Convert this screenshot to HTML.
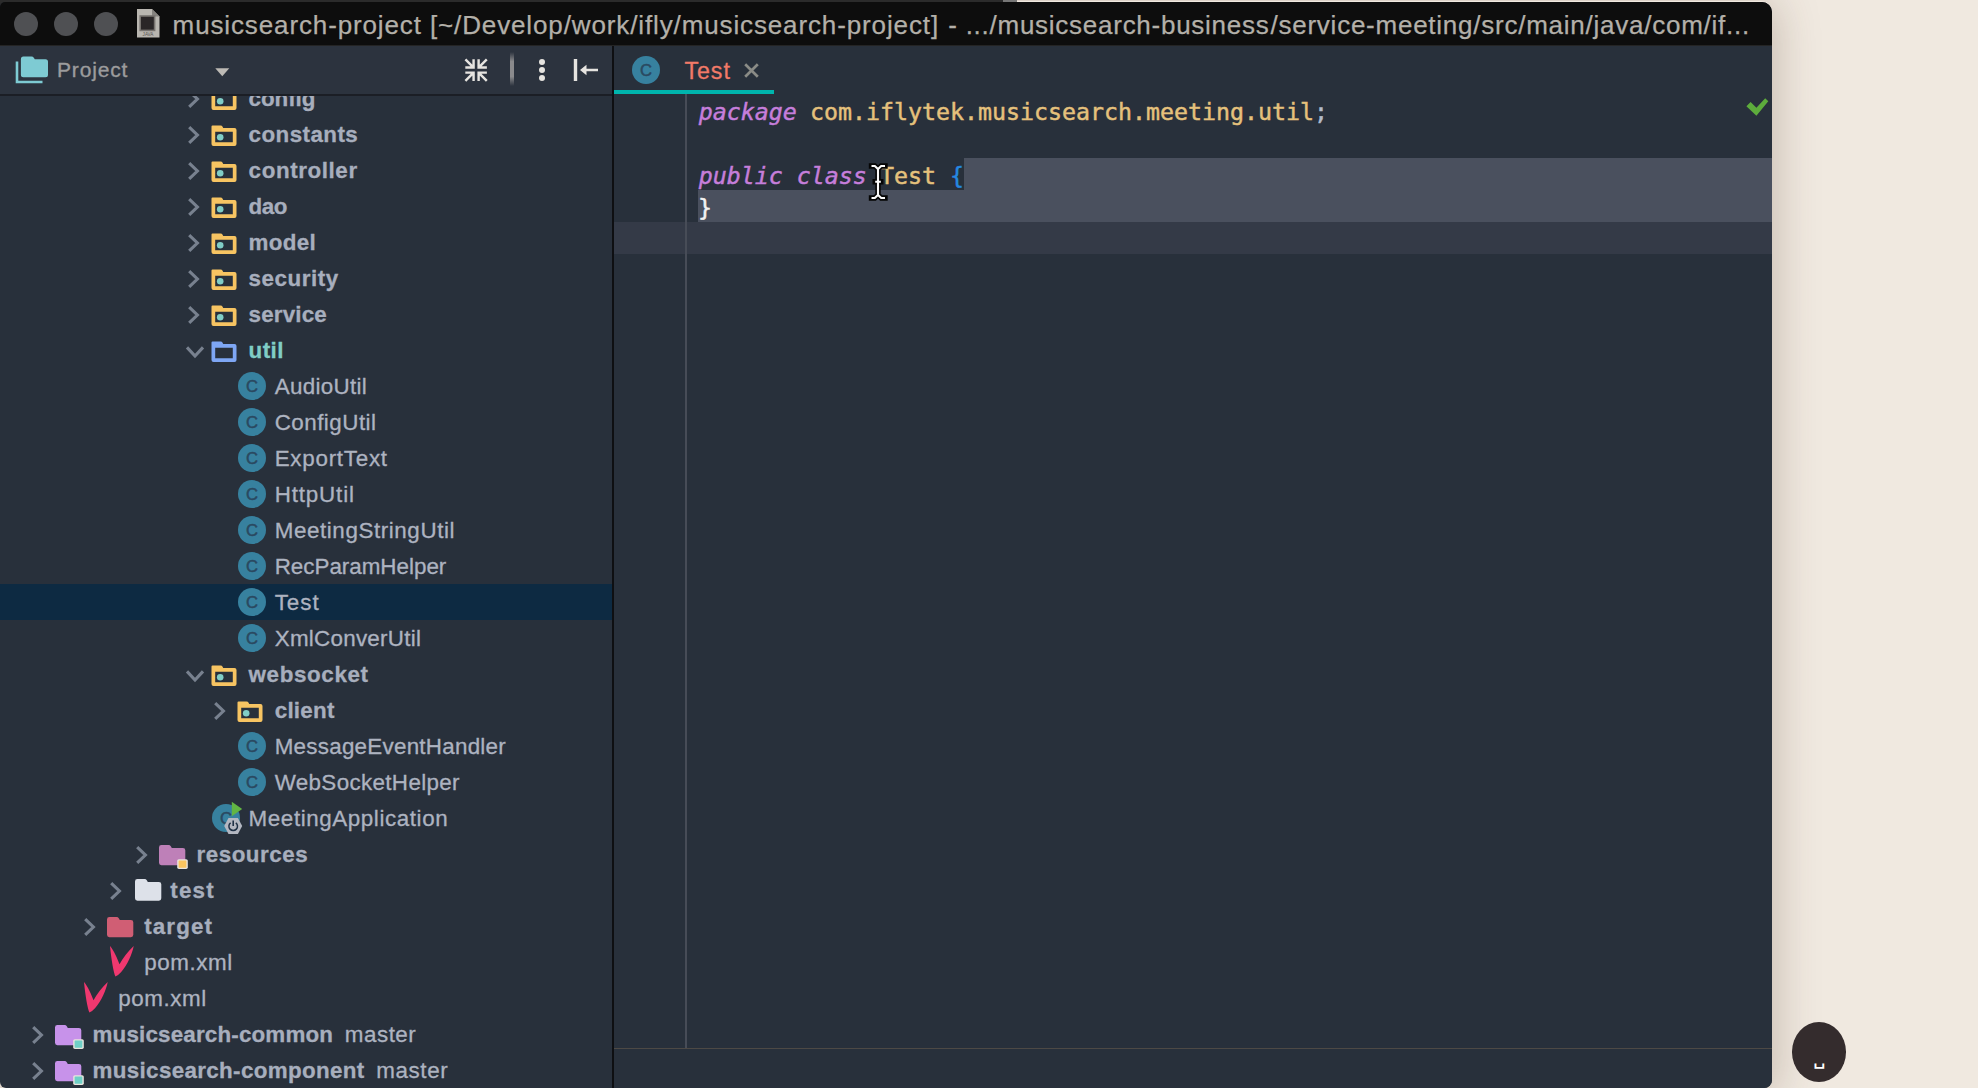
<!DOCTYPE html>
<html><head><meta charset="utf-8"><title>Test</title>
<style>
html,body{margin:0;padding:0}
body{width:1978px;height:1088px;overflow:hidden;position:relative;background:#f0e9e0;font-family:"Liberation Sans",sans-serif}
.topstrip{position:absolute;left:0;top:0;width:1003px;height:20px;background:#2b2b2b}
.topstrip2{position:absolute;left:1003px;top:0;width:14px;height:3px;background:#777}
.shadow{position:absolute;left:0;top:1px;width:1772px;height:1087px;border-radius:0 11px 8px 6px;box-shadow:0 4px 44px 4px rgba(80,55,35,.26)}
.win{position:absolute;left:0;top:2px;width:1772px;height:1086px;background:#28303b;border-radius:5px 10px 8px 6px;overflow:hidden}
.title{position:absolute;left:0;top:0;width:1772px;height:42.6px;background:#0d0d0d;border-bottom:2px solid #242424}
.tl{position:absolute;top:10px;width:24px;height:24px;border-radius:50%;background:#4f5053}
.tool{position:absolute;left:0;top:44px;width:612px;height:48px;background:#2c333e;border-bottom:2px solid #1b1e25}
.vsep{position:absolute;left:611.6px;top:44px;width:2.2px;height:1060px;background:#0e0f12}
.tabs{position:absolute;left:614px;top:44px;width:1158px;height:48px;background:#28303b}
.tabline{position:absolute;left:614px;top:87.6px;width:160px;height:4.7px;background:#00b5ad}
.treeclip{position:absolute;left:0;top:94px;width:612px;height:992px;overflow:hidden}
.tree{position:absolute;left:0;top:-96px;width:611px;height:1090px}
.t{position:absolute;white-space:pre;line-height:0;color:#a9b0bf;font-size:22.4px}
.t::before{content:"";display:inline-block;height:0;width:0}
.b{font-weight:bold;color:#a7aebd;-webkit-text-stroke:0.3px #a7aebd}
.n{font-weight:normal;color:#adb3c0;-webkit-text-stroke:0.3px #adb3c0}
.i{position:absolute;overflow:visible}
.ci{position:absolute;border-radius:50%;background:#37819f;color:#2a4961;font-size:16.6px;font-weight:normal;-webkit-text-stroke:0.5px #2a4961;text-align:center;font-family:"Liberation Sans",sans-serif}
.sel{position:absolute;left:0;width:612px;height:36px;background:#0d2a42}
.code{position:absolute;white-space:pre;font-family:"DejaVu Sans Mono","Liberation Mono",monospace;font-size:23.25px;line-height:0;color:#e5c17c;-webkit-text-stroke:0.45px #e5c17c}
.kw{position:relative;left:0.8px;color:#c67edb;font-style:italic;-webkit-text-stroke-color:#c67edb}
</style></head><body>
<div class="shadow"></div>
<div class="topstrip"></div><div class="topstrip2"></div>
<div class="win">
<div class="title">
<div class="tl" style="left:14px"></div><div class="tl" style="left:54px"></div><div class="tl" style="left:94px"></div>
<svg class="i" style="left:137px;top:7px" width="23" height="30" viewBox="0 0 23 30"><path d="M0 0 H15 L22.5 7.5 V28.6 H0 Z" fill="#b9b6b0"/><path d="M15 0 L22.5 7.5 H15 Z" fill="#85827e"/><rect x="3.2" y="7" width="14.4" height="14.4" fill="#2a2627" stroke="#77736f" stroke-width="1.6"/><text x="11" y="26.8" font-size="4.6" text-anchor="middle" fill="#55524f" font-family="Liberation Sans, sans-serif">JAVA</text></svg>
<span id="title1" class="t " style="left:172.6px;top:22.9px;font-size:26px;letter-spacing:0.874px;color:#b3b0a9;-webkit-text-stroke:0.25px #b3b0a9;">musicsearch-project [~/Develop/work/ifly/musicsearch-project]</span>
<span id="title2" class="t " style="left:948.3px;top:22.9px;font-size:26px;letter-spacing:0.739px;color:#b3b0a9;-webkit-text-stroke:0.25px #b3b0a9;">- .../musicsearch-business</span>
<span id="title3" class="t " style="left:1270.5px;top:22.9px;font-size:26px;letter-spacing:0.754px;color:#b3b0a9;-webkit-text-stroke:0.25px #b3b0a9;">/service-meeting/src/main/java/com/if...</span>
</div>
<div class="tool">
<svg class="i" style="left:15px;top:10px" width="36" height="30" viewBox="0 0 36 30"><path d="M2 5.5 V26 H27.5" fill="none" stroke="#7ecbd3" stroke-width="2.6"/><path d="M8.4 0.5 H16.5 Q18 0.5 18.8 1.8 L19.8 3.3 H30.5 Q33 3.3 33 5.8 V18.8 Q33 21.3 30.5 21.3 H8.4 Q5.9 21.3 5.9 18.8 V3 Q5.9 0.5 8.4 0.5 Z" fill="#7ecbd3"/></svg>
<span id="proj" class="t " style="left:57.0px;top:24.0px;font-size:21px;letter-spacing:0.834px;color:#9c9c9d;-webkit-text-stroke:0.35px #9c9c9d;">Project</span>
<svg class="i" style="left:215px;top:22px" width="15" height="9" viewBox="0 0 15 9"><path d="M0.3 0.2 H14.3 L7.3 8.2 Z" fill="#bdbab5"/></svg>
<svg class="i" style="left:464px;top:12px" width="24.2" height="24.2" viewBox="0 0 26 26"><g fill="none" stroke="#e6e4e0" stroke-width="2.6"><path d="M1.5 1.5 L9.8 9.8 M1.4 10.3 H10.3 V1.4"/><path d="M24.5 1.5 L16.2 9.8 M24.6 10.3 H15.7 V1.4"/><path d="M1.5 24.5 L9.8 16.2 M1.4 15.7 H10.3 V24.6"/><path d="M24.5 24.5 L16.2 16.2 M24.6 15.7 H15.7 V24.6"/></g></svg>
<div style="position:absolute;left:510.2px;top:6px;width:3.6px;height:34px;background:linear-gradient(to bottom,rgba(130,130,132,0),#8a8a8c 28%,#8a8a8c 72%,rgba(130,130,132,0))"></div>
<svg class="i" style="left:538px;top:13px" width="8" height="24" viewBox="0 0 8 24"><circle cx="4" cy="3" r="3" fill="#e6e4e0"/><circle cx="4" cy="11" r="3" fill="#e6e4e0"/><circle cx="4" cy="19.1" r="3" fill="#e6e4e0"/></svg>
<svg class="i" style="left:572px;top:13px" width="28" height="22" viewBox="0 0 28 22"><path d="M3.5 0 V22" stroke="#e6e4e0" stroke-width="3.4"/><path d="M26 11 H10" stroke="#e6e4e0" stroke-width="2.6"/><path d="M8 11 L14.5 5.8 V16.2 Z" fill="#e6e4e0"/></svg>
</div>
<div class="tabs">
<span class="ci" style="left:18.0px;top:10.3px;width:28px;height:28px;line-height:30.2px">C</span>
<span id="tab" class="t " style="left:70.5px;top:24.7px;font-size:23.2px;letter-spacing:0.942px;color:#f27a68;-webkit-text-stroke:0.3px #f27a68;">Test</span>
<svg class="i" style="left:130px;top:17px" width="15" height="15" viewBox="0 0 15 15"><path d="M1.2 1.2 L13.8 13.8 M13.8 1.2 L1.2 13.8" stroke="#8a8b86" stroke-width="2.7"/></svg>
</div>
<div class="tabline"></div>
<div class="treeclip"><div class="tree">
<svg class="i" style="left:186.0px;top:88.0px" width="16" height="22" viewBox="0 0 16 22"><path d="M3.2 3.2 L11.4 11 L3.2 18.8" fill="none" stroke="#78818f" stroke-width="3.1" stroke-linejoin="miter"/></svg>
<svg class="i" style="left:211.0px;top:88.7px" width="27" height="22" viewBox="0 0 27 22"><path d="M1.5 0.5 H9.5 Q11 0.5 11.6 1.8 L12.2 3 H23.5 Q25.5 3 25.5 5 V19 Q25.5 21 23.5 21 H2.5 Q0.5 21 0.5 19 V1.5 Q0.5 0.5 1.5 0.5 Z M4.2 6.8 V17.2 H21.8 V6.8 Z" fill="#f7c462" fill-rule="evenodd"/><circle cx="9.2" cy="12.2" r="3.3" fill="#80cdc6"/></svg>
<span id="r0" class="t b" style="left:248.6px;top:98.6px;font-size:22.4px;letter-spacing:-0.079px;">config</span>
<svg class="i" style="left:186.0px;top:124.0px" width="16" height="22" viewBox="0 0 16 22"><path d="M3.2 3.2 L11.4 11 L3.2 18.8" fill="none" stroke="#78818f" stroke-width="3.1" stroke-linejoin="miter"/></svg>
<svg class="i" style="left:211.0px;top:124.7px" width="27" height="22" viewBox="0 0 27 22"><path d="M1.5 0.5 H9.5 Q11 0.5 11.6 1.8 L12.2 3 H23.5 Q25.5 3 25.5 5 V19 Q25.5 21 23.5 21 H2.5 Q0.5 21 0.5 19 V1.5 Q0.5 0.5 1.5 0.5 Z M4.2 6.8 V17.2 H21.8 V6.8 Z" fill="#f7c462" fill-rule="evenodd"/><circle cx="9.2" cy="12.2" r="3.3" fill="#80cdc6"/></svg>
<span id="r1" class="t b" style="left:248.6px;top:134.6px;font-size:22.4px;letter-spacing:0.426px;">constants</span>
<svg class="i" style="left:186.0px;top:160.0px" width="16" height="22" viewBox="0 0 16 22"><path d="M3.2 3.2 L11.4 11 L3.2 18.8" fill="none" stroke="#78818f" stroke-width="3.1" stroke-linejoin="miter"/></svg>
<svg class="i" style="left:211.0px;top:160.7px" width="27" height="22" viewBox="0 0 27 22"><path d="M1.5 0.5 H9.5 Q11 0.5 11.6 1.8 L12.2 3 H23.5 Q25.5 3 25.5 5 V19 Q25.5 21 23.5 21 H2.5 Q0.5 21 0.5 19 V1.5 Q0.5 0.5 1.5 0.5 Z M4.2 6.8 V17.2 H21.8 V6.8 Z" fill="#f7c462" fill-rule="evenodd"/><circle cx="9.2" cy="12.2" r="3.3" fill="#80cdc6"/></svg>
<span id="r2" class="t b" style="left:248.6px;top:170.6px;font-size:22.4px;letter-spacing:0.583px;">controller</span>
<svg class="i" style="left:186.0px;top:196.0px" width="16" height="22" viewBox="0 0 16 22"><path d="M3.2 3.2 L11.4 11 L3.2 18.8" fill="none" stroke="#78818f" stroke-width="3.1" stroke-linejoin="miter"/></svg>
<svg class="i" style="left:211.0px;top:196.7px" width="27" height="22" viewBox="0 0 27 22"><path d="M1.5 0.5 H9.5 Q11 0.5 11.6 1.8 L12.2 3 H23.5 Q25.5 3 25.5 5 V19 Q25.5 21 23.5 21 H2.5 Q0.5 21 0.5 19 V1.5 Q0.5 0.5 1.5 0.5 Z M4.2 6.8 V17.2 H21.8 V6.8 Z" fill="#f7c462" fill-rule="evenodd"/><circle cx="9.2" cy="12.2" r="3.3" fill="#80cdc6"/></svg>
<span id="r3" class="t b" style="left:248.6px;top:206.6px;font-size:22.4px;letter-spacing:-0.471px;">dao</span>
<svg class="i" style="left:186.0px;top:232.0px" width="16" height="22" viewBox="0 0 16 22"><path d="M3.2 3.2 L11.4 11 L3.2 18.8" fill="none" stroke="#78818f" stroke-width="3.1" stroke-linejoin="miter"/></svg>
<svg class="i" style="left:211.0px;top:232.7px" width="27" height="22" viewBox="0 0 27 22"><path d="M1.5 0.5 H9.5 Q11 0.5 11.6 1.8 L12.2 3 H23.5 Q25.5 3 25.5 5 V19 Q25.5 21 23.5 21 H2.5 Q0.5 21 0.5 19 V1.5 Q0.5 0.5 1.5 0.5 Z M4.2 6.8 V17.2 H21.8 V6.8 Z" fill="#f7c462" fill-rule="evenodd"/><circle cx="9.2" cy="12.2" r="3.3" fill="#80cdc6"/></svg>
<span id="r4" class="t b" style="left:248.6px;top:242.6px;font-size:22.4px;letter-spacing:0.293px;">model</span>
<svg class="i" style="left:186.0px;top:268.0px" width="16" height="22" viewBox="0 0 16 22"><path d="M3.2 3.2 L11.4 11 L3.2 18.8" fill="none" stroke="#78818f" stroke-width="3.1" stroke-linejoin="miter"/></svg>
<svg class="i" style="left:211.0px;top:268.7px" width="27" height="22" viewBox="0 0 27 22"><path d="M1.5 0.5 H9.5 Q11 0.5 11.6 1.8 L12.2 3 H23.5 Q25.5 3 25.5 5 V19 Q25.5 21 23.5 21 H2.5 Q0.5 21 0.5 19 V1.5 Q0.5 0.5 1.5 0.5 Z M4.2 6.8 V17.2 H21.8 V6.8 Z" fill="#f7c462" fill-rule="evenodd"/><circle cx="9.2" cy="12.2" r="3.3" fill="#80cdc6"/></svg>
<span id="r5" class="t b" style="left:248.6px;top:278.6px;font-size:22.4px;letter-spacing:0.526px;">security</span>
<svg class="i" style="left:186.0px;top:304.0px" width="16" height="22" viewBox="0 0 16 22"><path d="M3.2 3.2 L11.4 11 L3.2 18.8" fill="none" stroke="#78818f" stroke-width="3.1" stroke-linejoin="miter"/></svg>
<svg class="i" style="left:211.0px;top:304.7px" width="27" height="22" viewBox="0 0 27 22"><path d="M1.5 0.5 H9.5 Q11 0.5 11.6 1.8 L12.2 3 H23.5 Q25.5 3 25.5 5 V19 Q25.5 21 23.5 21 H2.5 Q0.5 21 0.5 19 V1.5 Q0.5 0.5 1.5 0.5 Z M4.2 6.8 V17.2 H21.8 V6.8 Z" fill="#f7c462" fill-rule="evenodd"/><circle cx="9.2" cy="12.2" r="3.3" fill="#80cdc6"/></svg>
<span id="r6" class="t b" style="left:248.6px;top:314.6px;font-size:22.4px;letter-spacing:0.171px;">service</span>
<svg class="i" style="left:183.8px;top:343.6px" width="22" height="16" viewBox="0 0 22 16"><path d="M3 3.4 L11 12 L19 3.4" fill="none" stroke="#78818f" stroke-width="3.1" stroke-linejoin="miter"/></svg>
<svg class="i" style="left:211.0px;top:340.7px" width="27" height="22" viewBox="0 0 27 22"><path d="M1.5 0.5 H9.5 Q11 0.5 11.6 1.8 L12.2 3 H23.5 Q25.5 3 25.5 5 V19 Q25.5 21 23.5 21 H2.5 Q0.5 21 0.5 19 V1.5 Q0.5 0.5 1.5 0.5 Z M4.2 6.8 V17.2 H21.8 V6.8 Z" fill="#7ea6f4" fill-rule="evenodd"/></svg>
<span id="r7" class="t b" style="left:248.6px;top:350.6px;font-size:22.4px;letter-spacing:0.405px;color:#80cdc6;-webkit-text-stroke-color:#80cdc6;">util</span>
<span class="ci" style="left:238.0px;top:372.3px;width:28px;height:28px;line-height:30.2px">C</span>
<span id="r8" class="t n" style="left:274.7px;top:386.6px;font-size:22.4px;letter-spacing:0.299px;">AudioUtil</span>
<span class="ci" style="left:238.0px;top:408.3px;width:28px;height:28px;line-height:30.2px">C</span>
<span id="r9" class="t n" style="left:274.7px;top:422.6px;font-size:22.4px;letter-spacing:0.472px;">ConfigUtil</span>
<span class="ci" style="left:238.0px;top:444.3px;width:28px;height:28px;line-height:30.2px">C</span>
<span id="r10" class="t n" style="left:274.7px;top:458.6px;font-size:22.4px;letter-spacing:0.732px;">ExportText</span>
<span class="ci" style="left:238.0px;top:480.3px;width:28px;height:28px;line-height:30.2px">C</span>
<span id="r11" class="t n" style="left:274.7px;top:494.6px;font-size:22.4px;letter-spacing:0.837px;">HttpUtil</span>
<span class="ci" style="left:238.0px;top:516.3px;width:28px;height:28px;line-height:30.2px">C</span>
<span id="r12" class="t n" style="left:274.7px;top:530.6px;font-size:22.4px;letter-spacing:0.582px;">MeetingStringUtil</span>
<span class="ci" style="left:238.0px;top:552.3px;width:28px;height:28px;line-height:30.2px">C</span>
<span id="r13" class="t n" style="left:274.7px;top:566.6px;font-size:22.4px;letter-spacing:-0.010px;">RecParamHelper</span>
<div class="sel" style="top:584px"></div>
<span class="ci" style="left:238.0px;top:588.3px;width:28px;height:28px;line-height:30.2px">C</span>
<span id="r14" class="t n" style="left:274.7px;top:602.6px;font-size:22.4px;letter-spacing:0.980px;">Test</span>
<span class="ci" style="left:238.0px;top:624.3px;width:28px;height:28px;line-height:30.2px">C</span>
<span id="r15" class="t n" style="left:274.7px;top:638.6px;font-size:22.4px;letter-spacing:0.262px;">XmlConverUtil</span>
<svg class="i" style="left:183.8px;top:667.6px" width="22" height="16" viewBox="0 0 22 16"><path d="M3 3.4 L11 12 L19 3.4" fill="none" stroke="#78818f" stroke-width="3.1" stroke-linejoin="miter"/></svg>
<svg class="i" style="left:211.0px;top:664.7px" width="27" height="22" viewBox="0 0 27 22"><path d="M1.5 0.5 H9.5 Q11 0.5 11.6 1.8 L12.2 3 H23.5 Q25.5 3 25.5 5 V19 Q25.5 21 23.5 21 H2.5 Q0.5 21 0.5 19 V1.5 Q0.5 0.5 1.5 0.5 Z M4.2 6.8 V17.2 H21.8 V6.8 Z" fill="#f7c462" fill-rule="evenodd"/><circle cx="9.2" cy="12.2" r="3.3" fill="#80cdc6"/></svg>
<span id="r16" class="t b" style="left:248.6px;top:674.6px;font-size:22.4px;letter-spacing:0.611px;">websocket</span>
<svg class="i" style="left:212.0px;top:700.0px" width="16" height="22" viewBox="0 0 16 22"><path d="M3.2 3.2 L11.4 11 L3.2 18.8" fill="none" stroke="#78818f" stroke-width="3.1" stroke-linejoin="miter"/></svg>
<svg class="i" style="left:237.0px;top:700.7px" width="27" height="22" viewBox="0 0 27 22"><path d="M1.5 0.5 H9.5 Q11 0.5 11.6 1.8 L12.2 3 H23.5 Q25.5 3 25.5 5 V19 Q25.5 21 23.5 21 H2.5 Q0.5 21 0.5 19 V1.5 Q0.5 0.5 1.5 0.5 Z M4.2 6.8 V17.2 H21.8 V6.8 Z" fill="#f7c462" fill-rule="evenodd"/><circle cx="9.2" cy="12.2" r="3.3" fill="#80cdc6"/></svg>
<span id="r17" class="t b" style="left:274.7px;top:710.6px;font-size:22.4px;letter-spacing:0.253px;">client</span>
<span class="ci" style="left:238.0px;top:732.3px;width:28px;height:28px;line-height:30.2px">C</span>
<span id="r18" class="t n" style="left:274.7px;top:746.6px;font-size:22.4px;letter-spacing:0.251px;">MessageEventHandler</span>
<span class="ci" style="left:238.0px;top:768.3px;width:28px;height:28px;line-height:30.2px">C</span>
<span id="r19" class="t n" style="left:274.7px;top:782.6px;font-size:22.4px;letter-spacing:0.344px;">WebSocketHelper</span>
<span class="ci" style="left:212.0px;top:804.3px;width:28px;height:28px;line-height:30.2px">C</span>
<svg class="i" style="left:222px;top:801px" width="22" height="36" viewBox="0 0 22 36"><path d="M9.8 0.8 L20.2 8 L9.8 15.2 Z" fill="#62b543"/><path d="M2.2 25 L6.5 17 H15.9 L20.2 25 L15.9 33 H6.5 Z" fill="#b3b7c1"/><path d="M8.6 21.8 A4.3 4.3 0 1 0 13.8 21.8" fill="none" stroke="#1f3146" stroke-width="1.5"/><path d="M11.2 19.6 V25" stroke="#1f3146" stroke-width="1.6"/></svg>
<span id="r20" class="t n" style="left:248.6px;top:818.6px;font-size:22.4px;letter-spacing:0.578px;">MeetingApplication</span>
<svg class="i" style="left:134.0px;top:844.0px" width="16" height="22" viewBox="0 0 16 22"><path d="M3.2 3.2 L11.4 11 L3.2 18.8" fill="none" stroke="#78818f" stroke-width="3.1" stroke-linejoin="miter"/></svg>
<svg class="i" style="left:159.0px;top:845.1px" width="32" height="28" viewBox="0 0 32 28"><path d="M2.4 0 H9.6 Q11 0 11.8 1.3 L12.8 2.9 H23.9 Q26.3 2.9 26.3 5.3 V17.8 Q26.3 20.2 23.9 20.2 H2.4 Q0 20.2 0 17.8 V2.4 Q0 0 2.4 0 Z" fill="#be80b8"/><rect x="18.2" y="14.2" width="10.6" height="9.7" rx="1.6" fill="#e9e4de"/><rect x="19.6" y="15.5" width="7.8" height="7.2" rx="0.6" fill="#fbc55f"/></svg>
<span id="r21" class="t b" style="left:196.5px;top:854.6px;font-size:22.4px;letter-spacing:0.517px;">resources</span>
<svg class="i" style="left:108.0px;top:880.0px" width="16" height="22" viewBox="0 0 16 22"><path d="M3.2 3.2 L11.4 11 L3.2 18.8" fill="none" stroke="#78818f" stroke-width="3.1" stroke-linejoin="miter"/></svg>
<svg class="i" style="left:134.6px;top:879.0px" width="32" height="28" viewBox="0 0 32 28"><path d="M2.4 0 H9.6 Q11 0 11.8 1.3 L12.8 2.9 H23.9 Q26.3 2.9 26.3 5.3 V19.3 Q26.3 21.7 23.9 21.7 H2.4 Q0 21.7 0 19.3 V2.4 Q0 0 2.4 0 Z" fill="#dde1e9"/></svg>
<span id="r22" class="t b" style="left:170.2px;top:890.6px;font-size:22.4px;letter-spacing:1.243px;">test</span>
<svg class="i" style="left:82.0px;top:916.0px" width="16" height="22" viewBox="0 0 16 22"><path d="M3.2 3.2 L11.4 11 L3.2 18.8" fill="none" stroke="#78818f" stroke-width="3.1" stroke-linejoin="miter"/></svg>
<svg class="i" style="left:107.0px;top:917.1px" width="32" height="28" viewBox="0 0 32 28"><path d="M2.4 0 H9.6 Q11 0 11.8 1.3 L12.8 2.9 H23.9 Q26.3 2.9 26.3 5.3 V17.8 Q26.3 20.2 23.9 20.2 H2.4 Q0 20.2 0 17.8 V2.4 Q0 0 2.4 0 Z" fill="#d05e74"/></svg>
<span id="r23" class="t b" style="left:144.2px;top:926.6px;font-size:22.4px;letter-spacing:1.130px;">target</span>
<svg class="i" style="left:110.1px;top:946.2px" width="26" height="32" viewBox="0 0 26 32"><path d="M0 0 C2.2 2.2 5.8 8.6 9.5 18.2 C13 12.2 18 5.2 23.7 0 C22.2 8 17.2 19.2 11.2 26 Q8 29.6 5.4 30.6 C3.4 26 1.4 14 0 0 Z" fill="#f0386f"/></svg>
<span id="r24" class="t n" style="left:144.2px;top:962.6px;font-size:22.4px;letter-spacing:0.584px;">pom.xml</span>
<svg class="i" style="left:84.1px;top:982.2px" width="26" height="32" viewBox="0 0 26 32"><path d="M0 0 C2.2 2.2 5.8 8.6 9.5 18.2 C13 12.2 18 5.2 23.7 0 C22.2 8 17.2 19.2 11.2 26 Q8 29.6 5.4 30.6 C3.4 26 1.4 14 0 0 Z" fill="#f0386f"/></svg>
<span id="r25" class="t n" style="left:118.2px;top:998.6px;font-size:22.4px;letter-spacing:0.584px;">pom.xml</span>
<svg class="i" style="left:30.0px;top:1024.0px" width="16" height="22" viewBox="0 0 16 22"><path d="M3.2 3.2 L11.4 11 L3.2 18.8" fill="none" stroke="#78818f" stroke-width="3.1" stroke-linejoin="miter"/></svg>
<svg class="i" style="left:55.0px;top:1025.1px" width="32" height="28" viewBox="0 0 32 28"><path d="M2.4 0 H9.6 Q11 0 11.8 1.3 L12.8 2.9 H23.9 Q26.3 2.9 26.3 5.3 V17.8 Q26.3 20.2 23.9 20.2 H2.4 Q0 20.2 0 17.8 V2.4 Q0 0 2.4 0 Z" fill="#c792ea"/><rect x="18.2" y="14.2" width="10.6" height="9.7" rx="1.6" fill="#e9e4de"/><rect x="19.6" y="15.5" width="7.8" height="7.2" rx="0.6" fill="#6fcfc6"/></svg>
<span id="r26" class="t b" style="left:92.5px;top:1034.6px;font-size:22.4px;letter-spacing:0.168px;">musicsearch-common</span>
<span id="m26" class="t n" style="left:344.8px;top:1034.6px;font-size:22.4px;letter-spacing:0.510px;">master</span>
<svg class="i" style="left:30.0px;top:1060.0px" width="16" height="22" viewBox="0 0 16 22"><path d="M3.2 3.2 L11.4 11 L3.2 18.8" fill="none" stroke="#78818f" stroke-width="3.1" stroke-linejoin="miter"/></svg>
<svg class="i" style="left:55.0px;top:1061.1px" width="32" height="28" viewBox="0 0 32 28"><path d="M2.4 0 H9.6 Q11 0 11.8 1.3 L12.8 2.9 H23.9 Q26.3 2.9 26.3 5.3 V17.8 Q26.3 20.2 23.9 20.2 H2.4 Q0 20.2 0 17.8 V2.4 Q0 0 2.4 0 Z" fill="#c792ea"/><rect x="18.2" y="14.2" width="10.6" height="9.7" rx="1.6" fill="#e9e4de"/><rect x="19.6" y="15.5" width="7.8" height="7.2" rx="0.6" fill="#6fcfc6"/></svg>
<span id="r27" class="t b" style="left:92.5px;top:1070.6px;font-size:22.4px;letter-spacing:0.337px;">musicsearch-component</span>
<span id="m27" class="t n" style="left:376.2px;top:1070.6px;font-size:22.4px;letter-spacing:0.610px;">master</span>
</div></div>
<div class="vsep"></div>
<!-- editor -->
<div style="position:absolute;left:614px;top:92px;width:1158px;height:1000px;background:#28303b"></div>
<div style="position:absolute;left:964px;top:156px;width:808px;height:32px;background:#4a505e"></div>
<div style="position:absolute;left:698px;top:188px;width:1074px;height:32px;background:#4a505e"></div>
<div style="position:absolute;left:614px;top:220px;width:1158px;height:32px;background:#343a47"></div>
<div style="position:absolute;left:685.2px;top:92px;width:1.7px;height:954px;background:#474c57"></div>
<div style="position:absolute;left:614px;top:1045.8px;width:1158px;height:1.6px;background:#4d4945"></div>
<span class="code" style="left:698px;top:109.5px"><span class="kw">package</span> com.iflytek.musicsearch.meeting.util<span style="color:#b4bccb;-webkit-text-stroke-color:#b4bccb">;</span></span>
<span class="code" style="left:698px;top:173.5px"><span class="kw">public class</span> Test <span style="color:#2588e0;-webkit-text-stroke-color:#2588e0">{</span></span>
<span class="code" style="left:698px;top:205.5px;color:#f2f2f2;-webkit-text-stroke-color:#f2f2f2">}</span>
<svg class="i" style="left:1745px;top:93px" width="26" height="22" viewBox="0 0 26 22"><path d="M1.4 11.2 L5.6 7 L11.4 12.8 L20.2 3.2 L23.3 6.2 L11.4 20.8 Z" fill="#5dac3c"/></svg>
<!-- mouse I-beam cursor -->
<svg class="i" style="left:866px;top:158px" width="26" height="44" viewBox="0 0 26 44"><path d="M5.5 6 H8.8 L12 9 L15.2 6 H19 M12 9 V35 M5.5 38 H8.8 L12 35 L15.2 38 H19 M9.2 21.7 H14.8" fill="none" stroke="#050505" stroke-width="5.4" stroke-linecap="square" stroke-linejoin="miter"/><path d="M5.5 6 H8.8 L12 9 L15.2 6 H19 M12 9 V35 M5.5 38 H8.8 L12 35 L15.2 38 H19 M9.2 21.7 H14.8" fill="none" stroke="#fbfbfb" stroke-width="2.1" stroke-linecap="butt"/></svg>
</div>
<!-- floating bubble -->
<div style="position:absolute;left:1792px;top:1022px;width:54px;height:59.6px;border-radius:50%;background:#342c2d"></div>
<span id="sp" class="t" style="left:1813.5px;top:1059.7px;color:#fff;font-size:16px;font-weight:bold;font-family:'DejaVu Sans',sans-serif">&#9251;</span>
</body></html>
